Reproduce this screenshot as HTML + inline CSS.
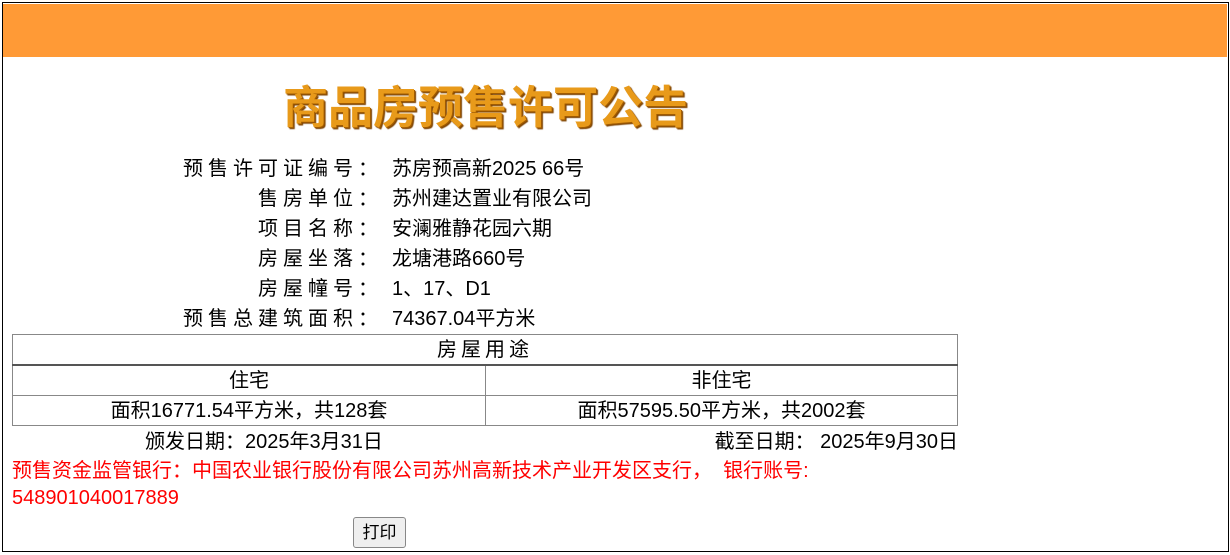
<!DOCTYPE html>
<html><head><meta charset="utf-8"><style>
body{margin:0;background:#fff;font-family:"Liberation Sans","Noto Sans CJK SC",sans-serif;color:#000;}
.frame{position:absolute;left:2px;top:2px;width:1225px;height:548px;border:1px solid #000;}
.band{position:absolute;left:3px;top:4px;width:1224px;height:53px;background:#ff9a36;}
.title{position:absolute;left:283px;top:71px;font-size:45px;font-weight:bold;font-family:"Noto Sans CJK SC",sans-serif;color:#e89a1a;text-shadow:1px 1px 0 #a05a00,2px 2px 1px #7a4000;white-space:nowrap;}
.row{position:absolute;left:0;height:30px;line-height:30px;font-size:20px;white-space:nowrap;}
.row .lab{position:absolute;left:0;width:383px;text-align:right;letter-spacing:5px}
.row .v{position:absolute;left:392px;}
table{position:absolute;left:12px;top:334px;width:946px;border-collapse:collapse;font-size:20px;}
td{border:1px solid #888;height:29px;padding:0;text-align:center;line-height:28px;}
.red{position:absolute;left:12px;top:458px;color:#f00;font-size:20px;line-height:27px;}
.btn{position:absolute;left:353px;top:517px;width:51px;height:29px;border:1px solid #888;border-radius:3px;background:#efefef;font-size:17px;line-height:29px;text-align:center;}
</style></head><body>
<div class="band"></div>
<div class="frame"></div>
<div class="title">商品房预售许可公告</div>
<div class="row" style="top:154px"><span class="lab">预售许可证编号：</span><span class="v">苏房预高新2025 66号</span></div>
<div class="row" style="top:184px"><span class="lab">售房单位：</span><span class="v">苏州建达置业有限公司</span></div>
<div class="row" style="top:214px"><span class="lab">项目名称：</span><span class="v">安澜雅静花园六期</span></div>
<div class="row" style="top:244px"><span class="lab">房屋坐落：</span><span class="v">龙塘港路660号</span></div>
<div class="row" style="top:274px"><span class="lab">房屋幢号：</span><span class="v">1、17、D1</span></div>
<div class="row" style="top:304px"><span class="lab">预售总建筑面积：</span><span class="v">74367.04平方米</span></div>
<table>
<tr><td colspan="2" style="letter-spacing:4px;border-bottom:2px solid #555">房屋用途</td></tr>
<tr><td style="width:472px">住宅</td><td>非住宅</td></tr>
<tr><td>面积16771.54平方米，共128套</td><td>面积57595.50平方米，共2002套</td></tr>
</table>
<div class="row" style="top:427px;width:958px"><span style="position:absolute;left:145px">颁发日期：2025年3月31日</span><span style="position:absolute;right:0">截至日期： 2025年9月30日</span></div>
<div class="red">预售资金监管银行：中国农业银行股份有限公司苏州高新技术产业开发区支行，&nbsp; 银行账号:<br>548901040017889</div>
<div class="btn">打印</div>
</body></html>
